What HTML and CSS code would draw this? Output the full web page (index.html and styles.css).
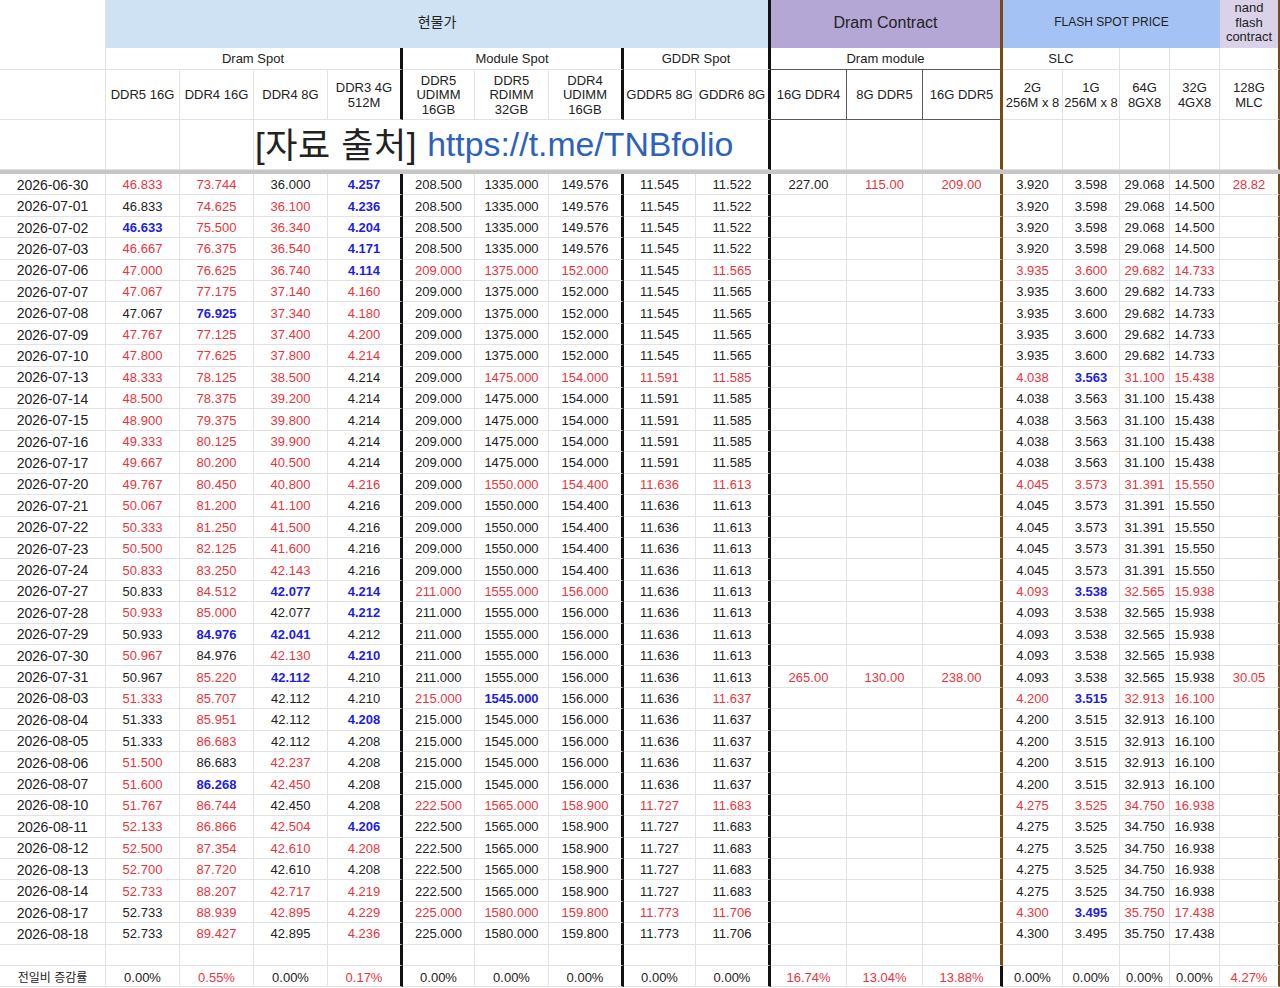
FILE: index.html
```html
<!DOCTYPE html>
<html lang="ko">
<head>
<meta charset="utf-8">
<title>Dram Spot</title>
<link rel="stylesheet" href="styles.css">
</head>
<body>
<div class="sheet">
  <div class="head">
    <div class="cell h1"></div>
    <div class="cell h1 s9 f-blue kb t-hyun">현물가</div>
    <div class="cell h1 s3 f-purple bb t-dc">Dram Contract</div>
    <div class="cell h1 s4 f-flash nr t-flash">FLASH SPOT PRICE</div>
    <div class="cell h1 f-nand br t-nand">nand<br>flash<br>contract</div>

    <div class="cell"></div>
    <div class="cell s4 kb">Dram Spot</div>
    <div class="cell s3 kb">Module Spot</div>
    <div class="cell s2 kb">GDDR Spot</div>
    <div class="cell s3 bb dbot">Dram module</div>
    <div class="cell s2">SLC</div>
    <div class="cell"></div>
    <div class="cell"></div>
    <div class="cell br"></div>

    <div class="cell"></div>
    <div class="cell">DDR5 16G</div>
    <div class="cell">DDR4 16G</div>
    <div class="cell">DDR4 8G</div>
    <div class="cell kb">DDR3 4G<br>512M</div>
    <div class="cell">DDR5<br>UDIMM<br>16GB</div>
    <div class="cell">DDR5<br>RDIMM<br>32GB</div>
    <div class="cell kb">DDR4<br>UDIMM<br>16GB</div>
    <div class="cell">GDDR5 8G</div>
    <div class="cell kb">GDDR6 8G</div>
    <div class="cell dbot dright">16G DDR4</div>
    <div class="cell dbot dright">8G DDR5</div>
    <div class="cell dbot bb">16G DDR5</div>
    <div class="cell">2G<br>256M x 8</div>
    <div class="cell">1G<br>256M x 8</div>
    <div class="cell">64G<br>8GX8</div>
    <div class="cell">32G<br>4GX8</div>
    <div class="cell br">128G<br>MLC</div>

    <div class="cell"></div>
    <div class="cell"></div>
    <div class="cell"></div>
    <div class="cell s7 kb src"><span class="src-label">[자료 출처]</span><span class="src-link">https://t.me/TNBfolio</span></div>
    <div class="cell"></div>
    <div class="cell"></div>
    <div class="cell bb"></div>
    <div class="cell"></div>
    <div class="cell"></div>
    <div class="cell"></div>
    <div class="cell"></div>
    <div class="cell br"></div>
  </div>
  <div class="sep"></div>

  <div class="row"><div>2026-06-30</div><div class="r">46.833</div><div class="r">73.744</div><div>36.000</div><div class="b">4.257</div><div>208.500</div><div>1335.000</div><div>149.576</div><div>11.545</div><div>11.522</div><div>227.00</div><div class="r">115.00</div><div class="r">209.00</div><div>3.920</div><div>3.598</div><div>29.068</div><div>14.500</div><div class="r">28.82</div></div>
  <div class="row"><div>2026-07-01</div><div>46.833</div><div class="r">74.625</div><div class="r">36.100</div><div class="b">4.236</div><div>208.500</div><div>1335.000</div><div>149.576</div><div>11.545</div><div>11.522</div><div></div><div></div><div></div><div>3.920</div><div>3.598</div><div>29.068</div><div>14.500</div><div></div></div>
  <div class="row"><div>2026-07-02</div><div class="b">46.633</div><div class="r">75.500</div><div class="r">36.340</div><div class="b">4.204</div><div>208.500</div><div>1335.000</div><div>149.576</div><div>11.545</div><div>11.522</div><div></div><div></div><div></div><div>3.920</div><div>3.598</div><div>29.068</div><div>14.500</div><div></div></div>
  <div class="row"><div>2026-07-03</div><div class="r">46.667</div><div class="r">76.375</div><div class="r">36.540</div><div class="b">4.171</div><div>208.500</div><div>1335.000</div><div>149.576</div><div>11.545</div><div>11.522</div><div></div><div></div><div></div><div>3.920</div><div>3.598</div><div>29.068</div><div>14.500</div><div></div></div>
  <div class="row"><div>2026-07-06</div><div class="r">47.000</div><div class="r">76.625</div><div class="r">36.740</div><div class="b">4.114</div><div class="r">209.000</div><div class="r">1375.000</div><div class="r">152.000</div><div>11.545</div><div class="r">11.565</div><div></div><div></div><div></div><div class="r">3.935</div><div class="r">3.600</div><div class="r">29.682</div><div class="r">14.733</div><div></div></div>
  <div class="row"><div>2026-07-07</div><div class="r">47.067</div><div class="r">77.175</div><div class="r">37.140</div><div class="r">4.160</div><div>209.000</div><div>1375.000</div><div>152.000</div><div>11.545</div><div>11.565</div><div></div><div></div><div></div><div>3.935</div><div>3.600</div><div>29.682</div><div>14.733</div><div></div></div>
  <div class="row"><div>2026-07-08</div><div>47.067</div><div class="b">76.925</div><div class="r">37.340</div><div class="r">4.180</div><div>209.000</div><div>1375.000</div><div>152.000</div><div>11.545</div><div>11.565</div><div></div><div></div><div></div><div>3.935</div><div>3.600</div><div>29.682</div><div>14.733</div><div></div></div>
  <div class="row"><div>2026-07-09</div><div class="r">47.767</div><div class="r">77.125</div><div class="r">37.400</div><div class="r">4.200</div><div>209.000</div><div>1375.000</div><div>152.000</div><div>11.545</div><div>11.565</div><div></div><div></div><div></div><div>3.935</div><div>3.600</div><div>29.682</div><div>14.733</div><div></div></div>
  <div class="row"><div>2026-07-10</div><div class="r">47.800</div><div class="r">77.625</div><div class="r">37.800</div><div class="r">4.214</div><div>209.000</div><div>1375.000</div><div>152.000</div><div>11.545</div><div>11.565</div><div></div><div></div><div></div><div>3.935</div><div>3.600</div><div>29.682</div><div>14.733</div><div></div></div>
  <div class="row"><div>2026-07-13</div><div class="r">48.333</div><div class="r">78.125</div><div class="r">38.500</div><div>4.214</div><div>209.000</div><div class="r">1475.000</div><div class="r">154.000</div><div class="r">11.591</div><div class="r">11.585</div><div></div><div></div><div></div><div class="r">4.038</div><div class="b">3.563</div><div class="r">31.100</div><div class="r">15.438</div><div></div></div>
  <div class="row"><div>2026-07-14</div><div class="r">48.500</div><div class="r">78.375</div><div class="r">39.200</div><div>4.214</div><div>209.000</div><div>1475.000</div><div>154.000</div><div>11.591</div><div>11.585</div><div></div><div></div><div></div><div>4.038</div><div>3.563</div><div>31.100</div><div>15.438</div><div></div></div>
  <div class="row"><div>2026-07-15</div><div class="r">48.900</div><div class="r">79.375</div><div class="r">39.800</div><div>4.214</div><div>209.000</div><div>1475.000</div><div>154.000</div><div>11.591</div><div>11.585</div><div></div><div></div><div></div><div>4.038</div><div>3.563</div><div>31.100</div><div>15.438</div><div></div></div>
  <div class="row"><div>2026-07-16</div><div class="r">49.333</div><div class="r">80.125</div><div class="r">39.900</div><div>4.214</div><div>209.000</div><div>1475.000</div><div>154.000</div><div>11.591</div><div>11.585</div><div></div><div></div><div></div><div>4.038</div><div>3.563</div><div>31.100</div><div>15.438</div><div></div></div>
  <div class="row"><div>2026-07-17</div><div class="r">49.667</div><div class="r">80.200</div><div class="r">40.500</div><div>4.214</div><div>209.000</div><div>1475.000</div><div>154.000</div><div>11.591</div><div>11.585</div><div></div><div></div><div></div><div>4.038</div><div>3.563</div><div>31.100</div><div>15.438</div><div></div></div>
  <div class="row"><div>2026-07-20</div><div class="r">49.767</div><div class="r">80.450</div><div class="r">40.800</div><div class="r">4.216</div><div>209.000</div><div class="r">1550.000</div><div class="r">154.400</div><div class="r">11.636</div><div class="r">11.613</div><div></div><div></div><div></div><div class="r">4.045</div><div class="r">3.573</div><div class="r">31.391</div><div class="r">15.550</div><div></div></div>
  <div class="row"><div>2026-07-21</div><div class="r">50.067</div><div class="r">81.200</div><div class="r">41.100</div><div>4.216</div><div>209.000</div><div>1550.000</div><div>154.400</div><div>11.636</div><div>11.613</div><div></div><div></div><div></div><div>4.045</div><div>3.573</div><div>31.391</div><div>15.550</div><div></div></div>
  <div class="row"><div>2026-07-22</div><div class="r">50.333</div><div class="r">81.250</div><div class="r">41.500</div><div>4.216</div><div>209.000</div><div>1550.000</div><div>154.400</div><div>11.636</div><div>11.613</div><div></div><div></div><div></div><div>4.045</div><div>3.573</div><div>31.391</div><div>15.550</div><div></div></div>
  <div class="row"><div>2026-07-23</div><div class="r">50.500</div><div class="r">82.125</div><div class="r">41.600</div><div>4.216</div><div>209.000</div><div>1550.000</div><div>154.400</div><div>11.636</div><div>11.613</div><div></div><div></div><div></div><div>4.045</div><div>3.573</div><div>31.391</div><div>15.550</div><div></div></div>
  <div class="row"><div>2026-07-24</div><div class="r">50.833</div><div class="r">83.250</div><div class="r">42.143</div><div>4.216</div><div>209.000</div><div>1550.000</div><div>154.400</div><div>11.636</div><div>11.613</div><div></div><div></div><div></div><div>4.045</div><div>3.573</div><div>31.391</div><div>15.550</div><div></div></div>
  <div class="row"><div>2026-07-27</div><div>50.833</div><div class="r">84.512</div><div class="b">42.077</div><div class="b">4.214</div><div class="r">211.000</div><div class="r">1555.000</div><div class="r">156.000</div><div>11.636</div><div>11.613</div><div></div><div></div><div></div><div class="r">4.093</div><div class="b">3.538</div><div class="r">32.565</div><div class="r">15.938</div><div></div></div>
  <div class="row"><div>2026-07-28</div><div class="r">50.933</div><div class="r">85.000</div><div>42.077</div><div class="b">4.212</div><div>211.000</div><div>1555.000</div><div>156.000</div><div>11.636</div><div>11.613</div><div></div><div></div><div></div><div>4.093</div><div>3.538</div><div>32.565</div><div>15.938</div><div></div></div>
  <div class="row"><div>2026-07-29</div><div>50.933</div><div class="b">84.976</div><div class="b">42.041</div><div>4.212</div><div>211.000</div><div>1555.000</div><div>156.000</div><div>11.636</div><div>11.613</div><div></div><div></div><div></div><div>4.093</div><div>3.538</div><div>32.565</div><div>15.938</div><div></div></div>
  <div class="row"><div>2026-07-30</div><div class="r">50.967</div><div>84.976</div><div class="r">42.130</div><div class="b">4.210</div><div>211.000</div><div>1555.000</div><div>156.000</div><div>11.636</div><div>11.613</div><div></div><div></div><div></div><div>4.093</div><div>3.538</div><div>32.565</div><div>15.938</div><div></div></div>
  <div class="row"><div>2026-07-31</div><div>50.967</div><div class="r">85.220</div><div class="b">42.112</div><div>4.210</div><div>211.000</div><div>1555.000</div><div>156.000</div><div>11.636</div><div>11.613</div><div class="r">265.00</div><div class="r">130.00</div><div class="r">238.00</div><div>4.093</div><div>3.538</div><div>32.565</div><div>15.938</div><div class="r">30.05</div></div>
  <div class="row"><div>2026-08-03</div><div class="r">51.333</div><div class="r">85.707</div><div>42.112</div><div>4.210</div><div class="r">215.000</div><div class="b">1545.000</div><div>156.000</div><div>11.636</div><div class="r">11.637</div><div></div><div></div><div></div><div class="r">4.200</div><div class="b">3.515</div><div class="r">32.913</div><div class="r">16.100</div><div></div></div>
  <div class="row"><div>2026-08-04</div><div>51.333</div><div class="r">85.951</div><div>42.112</div><div class="b">4.208</div><div>215.000</div><div>1545.000</div><div>156.000</div><div>11.636</div><div>11.637</div><div></div><div></div><div></div><div>4.200</div><div>3.515</div><div>32.913</div><div>16.100</div><div></div></div>
  <div class="row"><div>2026-08-05</div><div>51.333</div><div class="r">86.683</div><div>42.112</div><div>4.208</div><div>215.000</div><div>1545.000</div><div>156.000</div><div>11.636</div><div>11.637</div><div></div><div></div><div></div><div>4.200</div><div>3.515</div><div>32.913</div><div>16.100</div><div></div></div>
  <div class="row"><div>2026-08-06</div><div class="r">51.500</div><div>86.683</div><div class="r">42.237</div><div>4.208</div><div>215.000</div><div>1545.000</div><div>156.000</div><div>11.636</div><div>11.637</div><div></div><div></div><div></div><div>4.200</div><div>3.515</div><div>32.913</div><div>16.100</div><div></div></div>
  <div class="row"><div>2026-08-07</div><div class="r">51.600</div><div class="b">86.268</div><div class="r">42.450</div><div>4.208</div><div>215.000</div><div>1545.000</div><div>156.000</div><div>11.636</div><div>11.637</div><div></div><div></div><div></div><div>4.200</div><div>3.515</div><div>32.913</div><div>16.100</div><div></div></div>
  <div class="row"><div>2026-08-10</div><div class="r">51.767</div><div class="r">86.744</div><div>42.450</div><div>4.208</div><div class="r">222.500</div><div class="r">1565.000</div><div class="r">158.900</div><div class="r">11.727</div><div class="r">11.683</div><div></div><div></div><div></div><div class="r">4.275</div><div class="r">3.525</div><div class="r">34.750</div><div class="r">16.938</div><div></div></div>
  <div class="row"><div>2026-08-11</div><div class="r">52.133</div><div class="r">86.866</div><div class="r">42.504</div><div class="b">4.206</div><div>222.500</div><div>1565.000</div><div>158.900</div><div>11.727</div><div>11.683</div><div></div><div></div><div></div><div>4.275</div><div>3.525</div><div>34.750</div><div>16.938</div><div></div></div>
  <div class="row"><div>2026-08-12</div><div class="r">52.500</div><div class="r">87.354</div><div class="r">42.610</div><div class="r">4.208</div><div>222.500</div><div>1565.000</div><div>158.900</div><div>11.727</div><div>11.683</div><div></div><div></div><div></div><div>4.275</div><div>3.525</div><div>34.750</div><div>16.938</div><div></div></div>
  <div class="row"><div>2026-08-13</div><div class="r">52.700</div><div class="r">87.720</div><div>42.610</div><div>4.208</div><div>222.500</div><div>1565.000</div><div>158.900</div><div>11.727</div><div>11.683</div><div></div><div></div><div></div><div>4.275</div><div>3.525</div><div>34.750</div><div>16.938</div><div></div></div>
  <div class="row"><div>2026-08-14</div><div class="r">52.733</div><div class="r">88.207</div><div class="r">42.717</div><div class="r">4.219</div><div>222.500</div><div>1565.000</div><div>158.900</div><div>11.727</div><div>11.683</div><div></div><div></div><div></div><div>4.275</div><div>3.525</div><div>34.750</div><div>16.938</div><div></div></div>
  <div class="row"><div>2026-08-17</div><div>52.733</div><div class="r">88.939</div><div class="r">42.895</div><div class="r">4.229</div><div class="r">225.000</div><div class="r">1580.000</div><div class="r">159.800</div><div class="r">11.773</div><div class="r">11.706</div><div></div><div></div><div></div><div class="r">4.300</div><div class="b">3.495</div><div class="r">35.750</div><div class="r">17.438</div><div></div></div>
  <div class="row"><div>2026-08-18</div><div>52.733</div><div class="r">89.427</div><div>42.895</div><div class="r">4.236</div><div>225.000</div><div>1580.000</div><div>159.800</div><div>11.773</div><div>11.706</div><div></div><div></div><div></div><div>4.300</div><div>3.495</div><div>35.750</div><div>17.438</div><div></div></div>
  <div class="row"><div></div><div></div><div></div><div></div><div></div><div></div><div></div><div></div><div></div><div></div><div></div><div></div><div></div><div></div><div></div><div></div><div></div><div></div></div>
  <div class="row last"><div class="lbl">전일비 증감률</div><div>0.00%</div><div class="r">0.55%</div><div>0.00%</div><div class="r">0.17%</div><div>0.00%</div><div>0.00%</div><div>0.00%</div><div>0.00%</div><div>0.00%</div><div class="r">16.74%</div><div class="r">13.04%</div><div class="r kk">13.88%</div><div>0.00%</div><div>0.00%</div><div>0.00%</div><div>0.00%</div><div class="r">4.27%</div></div>
</div>
</body>
</html>
```

FILE: styles.css
```css
html, body {
  margin: 0;
  padding: 0;
  overflow: hidden;
  background: #ffffff;
}

body {
  width: 1280px;
  height: 988px;
  font-family: "Liberation Sans", Arial, "Noto Sans CJK KR", sans-serif;
  font-size: 13px;
  color: #222222;
}

.sheet {
  --cols: 106px 74px 74px 74px 75px 72px 74px 75px 72px 75px 76px 76px 80px 60px 57px 50px 50px 60px;
  width: 1280px;
}

.head {
  display: grid;
  grid-template-columns: var(--cols);
  grid-template-rows: 48px 22px 50px 50px;
}

.cell,
.row > div {
  box-sizing: border-box;
  border-right: 1px solid #e2e2e2;
  border-bottom: 1px solid #e2e2e2;
  display: flex;
  align-items: center;
  justify-content: center;
  text-align: center;
  white-space: nowrap;
  overflow: hidden;
  line-height: 14.5px;
}

.head > .cell { padding-top: 2px; }

.s2 { grid-column: span 2; }
.s3 { grid-column: span 3; }
.s4 { grid-column: span 4; }
.s7 { grid-column: span 7; }
.s9 { grid-column: span 9; }

.head > .h1 { border-bottom: none; padding-top: 0; }
.nr { border-right: none; }

.f-blue { background: #cfe2f3; }
.f-purple { background: #b4a7d6; }
.f-flash { background: #a4c2f4; }
.f-nand { background: #d9d2e9; }

.t-hyun { font-size: 14px; padding-bottom: 3px; }
.t-dc { font-size: 16px; padding-bottom: 1px; }
.t-flash { font-size: 12px; padding-bottom: 3px; }
.head > .t-nand { align-items: flex-start; padding-top: 1px; line-height: 14.5px; }

.kb { border-right: 3px solid #111111; }
.bb { border-right: 3px solid #7a4a14; }
.br { border-right: 2px solid #7a4a14; }

.dbot { border-bottom: 1px solid #5c5c5c; }
.dright { border-right: 1px solid #5c5c5c; }

.head > .src {
  justify-content: flex-start;
  padding-left: 1px;
  padding-top: 1px;
  line-height: 1;
  overflow: visible;
  gap: 10px;
}

.src-label {
  color: #222222;
  font-size: 35px;
  letter-spacing: 0.6px;
}
.src-link {
  color: #2c62b9;
  font-size: 33.8px;
}

.sep {
  height: 4px;
  background: #c6c6c6;
}

.row {
  display: grid;
  grid-template-columns: var(--cols);
  height: 21.42px;
}

.row > div { line-height: 1; padding-top: 1px; }

.row.last > div { padding-top: 3px; }

.row > :first-child { font-size: 14px; }
.row > :nth-child(5),
.row > :nth-child(8),
.row > :nth-child(10) { border-right: 3px solid #111111; }
.row > :nth-child(13) { border-right: 3px solid #7a4a14; }
.row > :nth-child(18) { border-right: 2px solid #7a4a14; }

.row > .kk { border-right-color: #111111; }
.row > .lbl { font-size: 12px; }

.r { color: #e8343c; }
.b { color: #1e1ee0; font-weight: bold; }
```
